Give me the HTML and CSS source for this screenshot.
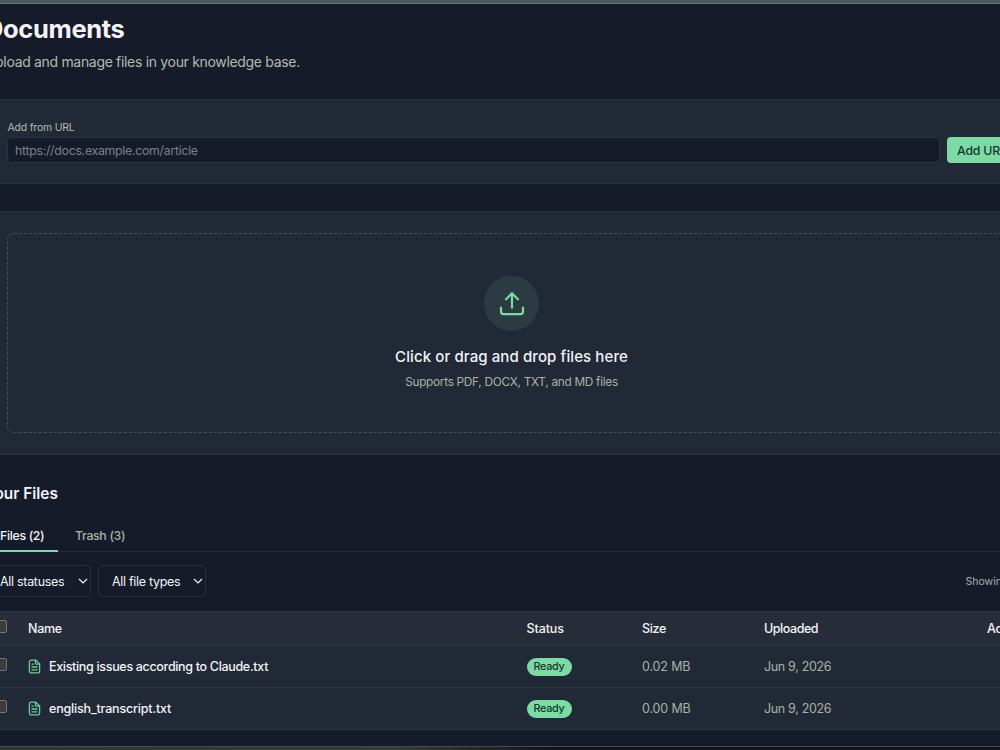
FILE: index.html
```
<!DOCTYPE html>
<html lang="en">
<head>
  <meta charset="UTF-8" />
  <title>Documents</title>
  <link rel="stylesheet" href="styles.css">
</head>
<body>
  <div class="top-strip"></div>

  <main class="page">
    <h1>Documents</h1>
    <p class="subtitle">Upload and manage files in your knowledge base.</p>

    <section class="card url-card">
      <label class="url-label" for="url">Add from URL</label>
      <div class="url-row">
        <input class="url-input" id="url" type="text" placeholder="https://docs.example.com/article">
        <button class="btn-add">Add URL</button>
      </div>
    </section>

    <section class="card upload-card">
      <div class="dropzone">
        <div class="upload-icon">
          <svg width="28" height="28" viewBox="0 0 24 24" fill="none" stroke="currentColor" stroke-width="1.9" stroke-linecap="round" stroke-linejoin="round">
            <path d="M2.6 15v3.7a2 2 0 0 0 2 2h14.8a2 2 0 0 0 2-2V15" />
            <path d="M6.9 7.9L12 2.8l5.1 5.1M12 2.8v12.4" />
          </svg>
        </div>
        <p class="drop-title">Click or drag and drop files here</p>
        <p class="drop-hint">Supports PDF, DOCX, TXT, and MD files</p>
      </div>
    </section>

    <h2>Your Files</h2>
    <div class="tabs">
      <div class="tab active">Files (2)</div>
      <div class="tab">Trash (3)</div>
    </div>

    <div class="filters">
      <div class="select status-select">
        <span>All statuses</span>
        <svg width="10" height="6" viewBox="0 0 10 6" fill="none" stroke="currentColor" stroke-width="1.2"><path d="M1 1l4 4 4-4" /></svg>
      </div>
      <div class="select type-select">
        <span>All file types</span>
        <svg width="10" height="6" viewBox="0 0 10 6" fill="none" stroke="currentColor" stroke-width="1.2"><path d="M1 1l4 4 4-4" /></svg>
      </div>
      <span class="count">Showing 2 of 2</span>
    </div>

    <div class="table">
      <div class="row head">
        <span class="check"></span>
        <span>Name</span>
        <span class="col-status">Status</span>
        <span>Size</span>
        <span class="col-uploaded">Uploaded</span>
        <span class="actions">Actions</span>
      </div>
      <div class="row">
        <span class="check"></span>
        <span class="name">
          <svg class="file-icon" width="13" height="15" viewBox="0 0 13 15" fill="none" stroke="currentColor" stroke-width="1.3" stroke-linecap="round" stroke-linejoin="round">
            <path d="M7.8 1.2H3A1.6 1.6 0 0 0 1.4 2.8v9.4A1.6 1.6 0 0 0 3 13.8h7a1.6 1.6 0 0 0 1.6-1.6V5z" />
            <path d="M7.5 1.3v2.6a1.2 1.2 0 0 0 1.2 1.2h2.8M4 5.2h1.4M4 8h5M4 10.8h5" />
          </svg>
          <span class="name-text">Existing issues according to Claude.txt</span>
        </span>
        <span class="badge">Ready</span>
        <span class="muted size">0.02 MB</span>
        <span class="muted date">Jun 9, 2026</span>
      </div>
      <div class="row">
        <span class="check"></span>
        <span class="name">
          <svg class="file-icon" width="13" height="15" viewBox="0 0 13 15" fill="none" stroke="currentColor" stroke-width="1.3" stroke-linecap="round" stroke-linejoin="round">
            <path d="M7.8 1.2H3A1.6 1.6 0 0 0 1.4 2.8v9.4A1.6 1.6 0 0 0 3 13.8h7a1.6 1.6 0 0 0 1.6-1.6V5z" />
            <path d="M7.5 1.3v2.6a1.2 1.2 0 0 0 1.2 1.2h2.8M4 5.2h1.4M4 8h5M4 10.8h5" />
          </svg>
          <span class="name-text short">english_transcript.txt</span>
        </span>
        <span class="badge">Ready</span>
        <span class="muted size">0.00 MB</span>
        <span class="muted date">Jun 9, 2026</span>
      </div>
    </div>
  </main>

  <div class="bottom-strip"></div>
</body>
</html>
```
FILE: styles.css
```
* {
  box-sizing: border-box;
}

html, body {
  margin: 0;
  padding: 0;
  height: 750px;
  overflow: hidden;
  background: #161b2a;
  color: #f3f3f8;
  font-family: "Inter", "Liberation Sans", sans-serif;
  font-size: 12.5px;
}

body {
  display: flex;
  flex-direction: column;
}

h1, h2, p {
  margin: 0;
}

.top-strip {
  height: 4px;
  flex: none;
  background: #4a5a61;
  border-bottom: 1px solid #66777c;
}

/* the page is wider than the window and runs off both sides */
.page {
  width: 1053px;
  height: 742px;
  flex: none;
  margin-left: -15px;
}

h1 {
  margin-top: 8px;
  font-size: 25.5px;
  line-height: 33px;
  font-weight: 700;
  letter-spacing: -0.35px;
}

.subtitle {
  margin-top: 7px;
  font-size: 14px;
  line-height: 20px;
  letter-spacing: -0.32px;
  color: #b3bab2;
}

.card {
  background: #222936;
  border: 1px solid #2b3340;
  border-radius: 8px;
  padding: 21px;
}

.url-card {
  margin-top: 27px;
  height: 85px;
  padding-right: 20px;
}

.url-label {
  display: block;
  padding-left: 0.5px;
  font-size: 10.5px;
  line-height: 14px;
  letter-spacing: -0.22px;
  color: #b3bab2;
}

.url-row {
  display: flex;
  align-items: flex-end;
  gap: 7px;
  margin-top: 2px;
}

.url-input {
  flex: 1;
  height: 26px;
  padding: 0 7px;
  background: #161b2a;
  border: 1px solid #2b3340;
  border-radius: 4px;
  font: 12.3px "Inter", sans-serif;
  letter-spacing: -0.27px;
}

.url-input::placeholder {
  color: #7d808b;
}

.btn-add {
  width: 70px;
  height: 26px;
  padding: 0 0 0 10px;
  text-align: left;
  border: none;
  border-radius: 4px;
  background: #7bdba5;
  color: #17372b;
  font: 500 12.3px "Inter", sans-serif;
  letter-spacing: -0.2px;
  white-space: nowrap;
}

.upload-card {
  margin-top: 27px;
  height: 244px;
}

.dropzone {
  height: 200px;
  padding-top: 42px;
  border: 1px dashed #464d58;
  border-radius: 7px;
  display: flex;
  flex-direction: column;
  align-items: center;
}

.upload-icon {
  width: 55px;
  height: 55px;
  border-radius: 50%;
  background: #2b3b41;
  color: #7bdba5;
  display: flex;
  align-items: center;
  justify-content: center;
}

.drop-title {
  margin-top: 16px;
  font-size: 15px;
  line-height: 20px;
  font-weight: 500;
  letter-spacing: 0.1px;
}

.drop-hint {
  margin-top: 6px;
  font-size: 11.8px;
  line-height: 18px;
  letter-spacing: -0.28px;
  color: #a9b1a9;
}

h2 {
  margin-top: 29px;
  font-size: 15.4px;
  line-height: 20px;
  font-weight: 600;
}

.tabs {
  display: flex;
  gap: 3px;
  margin-top: 15px;
  height: 33px;
  border-bottom: 1px solid #272e3b;
}

.tab {
  height: 33px;
  padding: 0 14px;
  font-size: 12.3px;
  line-height: 33px;
  font-weight: 500;
  letter-spacing: -0.32px;
  white-space: nowrap;
  color: #a9b1a9;
}

.tab.active {
  width: 73px;
  padding-left: 15px;
  color: #f3f3f8;
  border-bottom: 2px solid #7bdba5;
}

.filters {
  display: flex;
  align-items: center;
  gap: 7px;
  margin-top: 13px;
}

.select {
  display: flex;
  align-items: center;
  justify-content: space-between;
  height: 32px;
  padding: 0 2px 0 13px;
  border: 1px solid #292f3b;
  border-radius: 4px;
  letter-spacing: -0.3px;
  white-space: nowrap;
}

.status-select {
  width: 106px;
  padding-left: 14px;
}

.type-select {
  width: 108px;
}

.count {
  margin-left: auto;
  width: 72.5px;
  font-size: 10.5px;
  color: #a9b1a9;
  white-space: nowrap;
}

.table {
  margin-top: 14px;
  border-top: 1px solid #2c3440;
}

.row {
  display: grid;
  grid-template-columns: 34px 498.5px 115.5px 122px 1fr;
  grid-auto-flow: column;
  align-items: center;
  height: 42px;
  padding: 0 10px 0 9px;
  background: #222936;
  border-bottom: 1px solid #2c3440;
}

.row.head {
  grid-template-columns: 34px 498.5px 115.5px 122px 223px 1fr;
  height: 34px;
  background: #262d39;
  font-weight: 500;
  letter-spacing: -0.3px;
}

.head .col-status {
  letter-spacing: -0.1px;
}

.head .col-uploaded {
  letter-spacing: -0.45px;
}

.check {
  width: 13px;
  height: 13px;
  margin-bottom: 5px;
  background: #3b3b3d;
  border: 1px solid #757575;
  border-radius: 2px;
}

.name {
  display: flex;
  align-items: center;
  gap: 8px;
  font-weight: 500;
}

.name-text {
  letter-spacing: -0.32px;
}

.name-text.short {
  letter-spacing: -0.18px;
}

.file-icon {
  color: #6cca97;
}

.badge {
  width: 45px;
  height: 18px;
  border-radius: 9px;
  background: #7bdba5;
  color: #17372b;
  font-size: 10.8px;
  line-height: 18px;
  font-weight: 500;
  letter-spacing: -0.25px;
  text-align: center;
}

.muted {
  color: #a9b1a9;
}

.size {
  letter-spacing: -0.15px;
}

.date {
  letter-spacing: -0.33px;
}

.bottom-strip {
  height: 4px;
  flex: none;
  border-top: 1px solid #454a55;
  background: linear-gradient(to right, #2c3731, #343a35 40%, #121416 55%, #121416);
}
```
